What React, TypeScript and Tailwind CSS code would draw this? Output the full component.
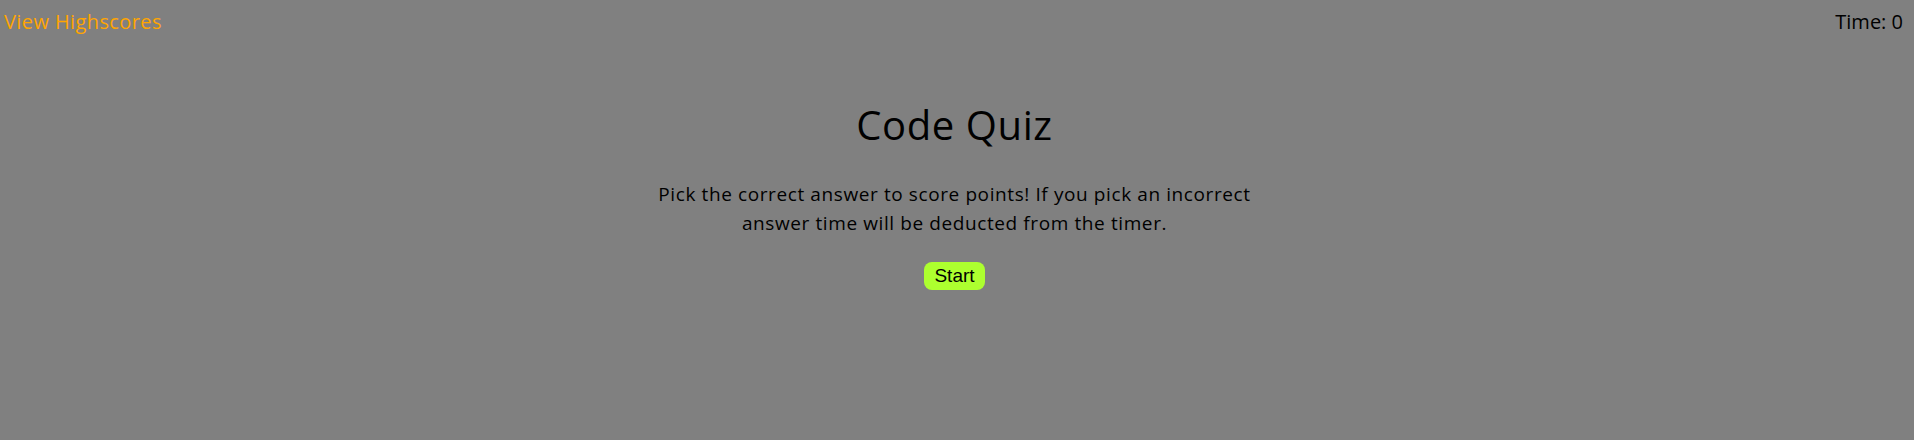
export default function App() {
  return (
    <div className="min-h-[440px] w-full bg-[#808080] font-['Open_Sans',sans-serif]">
      <header className="flex items-start justify-between px-[4px] pt-[8px]">
        <a className="text-[20px] leading-[28px] tracking-[0.4px] text-[#ffa500]" href="#">View Highscores</a>
        <div className="pr-[7px] text-[20px] leading-[28px] text-black">Time: 0</div>
      </header>
      <main className="flex flex-col items-center pr-[5px]">
        <h1 className="mt-[65px] text-[40px] leading-[48px] tracking-[0.6px] text-black">Code Quiz</h1>
        <p className="mt-[31px] text-center text-[19px] leading-[29px] tracking-[0.6px] text-black">
          Pick the correct answer to score points! If you pick an incorrect
          <br />
          answer time will be deducted from the timer.
        </p>
        <button className="mt-[24px] rounded-[8px] bg-[#adff2f] px-[10px] font-['Liberation_Sans',Arial,sans-serif] text-[19px] leading-[28px] text-black">
          Start
        </button>
      </main>
    </div>
  );
}
